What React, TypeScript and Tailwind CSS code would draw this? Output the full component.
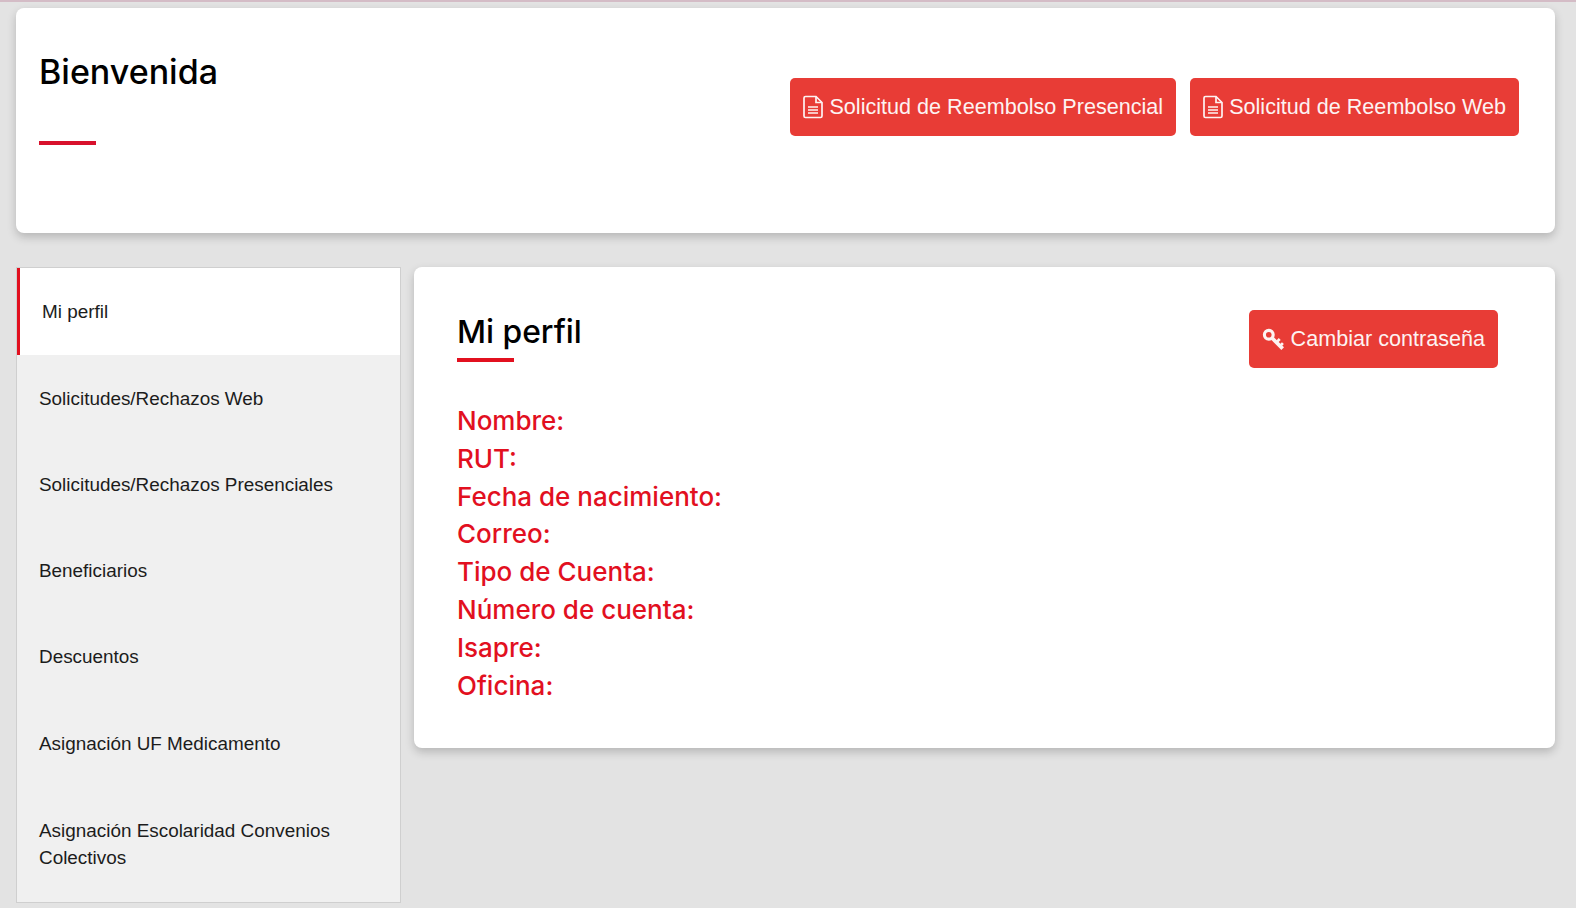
import React from "react";

const sideItems = [
  "Solicitudes/Rechazos Web",
  "Solicitudes/Rechazos Presenciales",
  "Beneficiarios",
  "Descuentos",
  "Asignación UF Medicamento",
];

const profileFields = [
  "Nombre:",
  "RUT:",
  "Fecha de nacimiento:",
  "Correo:",
  "Tipo de Cuenta:",
  "Número de cuenta:",
  "Isapre:",
  "Oficina:",
];

const FileIcon = () => (
  <svg width="20" height="24" viewBox="0 0 20 24" fill="none" stroke="currentColor" strokeWidth="1.7" className="shrink-0">
    <path d="M2.5 1.5h10.5l6 6v13.5a1.5 1.5 0 0 1-1.5 1.5H2.5A1.5 1.5 0 0 1 1 21V3a1.5 1.5 0 0 1 1.5-1.5z" />
    <path d="M13 1.5v6h6" />
    <path d="M5 12h10M5 15h10M5 18h10" />
  </svg>
);

const KeyIcon = () => (
  <svg width="23" height="23" viewBox="0 0 22 22" fill="none" stroke="currentColor" className="shrink-0">
    <circle cx="6.5" cy="6.5" r="4.2" strokeWidth="3" />
    <path d="M9.8 9.8l10 10" strokeWidth="3.6" />
    <path d="M14 13.5l3-3M17.5 17l2.5-2.5" strokeWidth="2.6" />
  </svg>
);

const RedButton = ({ icon, label }: { icon: React.ReactNode; label: string }) => (
  <button className="flex h-[58px] items-center gap-[6px] rounded-[5px] bg-[#e83c36] px-[13px] font-['Liberation_Sans',sans-serif] text-[21.6px] text-[#fdf3f2]">
    {icon}
    <span>{label}</span>
  </button>
);

export default function App() {
  return (
    <div className="min-h-[908px] bg-[#e3e3e3] font-['Liberation_Sans',sans-serif]">
      <div className="h-[2px] bg-[#d4bcc6]" />
      <div className="pl-4 pr-[21px] pt-[6px]">
        <div className="flex h-[225px] items-start justify-between rounded-[8px] bg-white pl-[23px] pr-[36px] shadow-[0_4px_10px_rgba(0,0,0,0.2)]">
          <div className="pt-[43px]">
            <h1 className="font-['Inter',sans-serif] text-[34px] font-[550] leading-[42px] text-black">Bienvenida</h1>
            <div className="mt-[48px] h-[4px] w-[57px] bg-[#d8112c]" />
          </div>
          <div className="flex gap-[14px] pt-[70px]">
            <RedButton icon={<FileIcon />} label="Solicitud de Reembolso Presencial" />
            <RedButton icon={<FileIcon />} label="Solicitud de Reembolso Web" />
          </div>
        </div>

        <div className="mt-[34px] flex items-start gap-[13px]">
          <nav className="w-[385px] shrink-0 border border-[#cfcfcf] bg-[#f0f0f0] text-[18.9px] text-[#1c1c1c]">
            <div className="flex h-[87px] items-center border-l-[3px] border-[#e2101f] bg-white pl-[22px] pt-[2px]">Mi perfil</div>
            {sideItems.map((item) => (
              <div key={item} className="flex h-[86.2px] items-center pl-[22px] pt-[2px]">{item}</div>
            ))}
            <div className="flex h-[116.5px] items-center pl-[22px] pr-10 leading-[27px]">
              Asignación Escolaridad Convenios Colectivos
            </div>
          </nav>

          <main className="flex h-[481px] flex-1 items-start justify-between rounded-[8px] bg-white pl-[43px] pr-[57px] pt-[43px] shadow-[0_4px_10px_rgba(0,0,0,0.2)]">
            <div>
              <h2 className="font-['Inter',sans-serif] text-[31.8px] font-[550] leading-[44px] text-black">Mi perfil</h2>
              <div className="mt-[4px] h-[4px] w-[57px] bg-[#e2101f]" />
              <div className="mt-[40px] font-['Inter',sans-serif] text-[26px] font-[550] leading-[37.8px] text-[#e2101f]">
                {profileFields.map((field) => (
                  <div key={field}>{field}</div>
                ))}
              </div>
            </div>
            <RedButton icon={<KeyIcon />} label="Cambiar contraseña" />
          </main>
        </div>
      </div>
    </div>
  );
}
